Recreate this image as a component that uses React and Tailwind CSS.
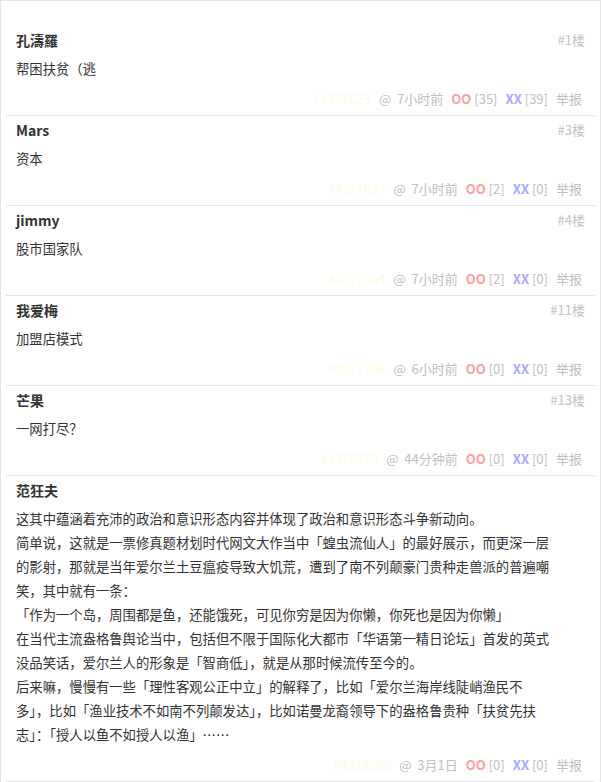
import React from 'react'

const posts = [
  { name: '孔濤羅', floor: 1, id: 4377623, time: '7小时前', oo: 35, xx: 39, lines: [['帮困扶贫（逃']] },
  { name: 'Mars', floor: 3, id: 4377637, time: '7小时前', oo: 2, xx: 0, lines: [['资本']] },
  { name: 'jimmy', floor: 4, id: 4377654, time: '7小时前', oo: 2, xx: 0, lines: [['股市国家队']] },
  { name: '我爱梅', floor: 11, id: 4377798, time: '6小时前', oo: 0, xx: 0, lines: [['加盟店模式']] },
  { name: '芒果', floor: 13, id: 4378273, time: '44分钟前', oo: 0, xx: 0, lines: [['一网打尽？']] },
  {
    name: '范狂夫',
    floor: null,
    id: 4378399,
    time: '3月1日',
    oo: 0,
    xx: 0,
    lines: [
      ['这其中蕴涵着充沛的政治和意识形态内容并体现了政治和意识形态斗争新动向。'],
      [
        '简单说，这就是一票修真题材划时代网文大作当中「蝗虫流仙人」的最好展示，而更深一层',
        '的影射，那就是当年爱尔兰土豆瘟疫导致大饥荒，遭到了南不列颠豪门贵种走兽派的普遍嘲',
        '笑，其中就有一条：',
      ],
      ['「作为一个岛，周围都是鱼，还能饿死，可见你穷是因为你懒，你死也是因为你懒」'],
      [
        '在当代主流盎格鲁舆论当中，包括但不限于国际化大都市「华语第一精日论坛」首发的英式',
        '没品笑话，爱尔兰人的形象是「智商低」，就是从那时候流传至今的。',
      ],
      [
        '后来嘛，慢慢有一些「理性客观公正中立」的解释了，比如「爱尔兰海岸线陡峭渔民不',
        '多」，比如「渔业技术不如南不列颠发达」，比如诺曼龙裔领导下的盎格鲁贵种「扶贫先扶',
        '志」：「授人以鱼不如授人以渔」……',
      ],
    ],
  },
]

function Post({ post, first }) {
  return (
    <div className={`mx-[5px] pl-[10px] pr-[10px] pt-[4px] pb-[5px] ${first ? '' : 'border-t border-[#e3e3e3]'}`}>
      <div className="flex items-center justify-between h-[20px]">
        <span className="text-[14px] font-bold text-[#333]">{post.name}</span>
        {post.floor && <span className="text-[13px] text-[#c4c4c4]">#{post.floor}楼</span>}
      </div>
      <div className="mt-[7px] text-[13.33px] leading-[24px] text-[#333]">
        {post.lines.map((para, i) => (
          <p key={i}>
            {para.map((l, j) => (
              <React.Fragment key={j}>
                {j > 0 && <br />}
                {l}
              </React.Fragment>
            ))}
          </p>
        ))}
      </div>
      <div className="mt-[7px] flex items-center justify-end gap-[8px] pr-[3px] h-[22px] text-[13px] text-[#c0c0c0]">
        <span className="text-[#fdfbe4]">#{post.id}</span>
        <span>@&nbsp;&nbsp;{post.time}</span>
        <span>
          <b className="text-[#ff9f9f]">OO</b> [{post.oo}]
        </span>
        <span>
          <b className="text-[#a9a9ff]">XX</b> [{post.xx}]
        </span>
        <span>举报</span>
      </div>
    </div>
  )
}

export default function App() {
  return (
    <div
      className="w-[601px] min-h-[782px] bg-white border border-[#e5e5e5] pt-[25px]"
      style={{ fontFamily: '"Noto Sans CJK SC", "Noto Sans", sans-serif' }}
    >
      {posts.map((p, i) => (
        <Post key={p.id} post={p} first={i === 0} />
      ))}
      <div className="mx-[5px] border-t border-[#e3e3e3]" />
    </div>
  )
}
